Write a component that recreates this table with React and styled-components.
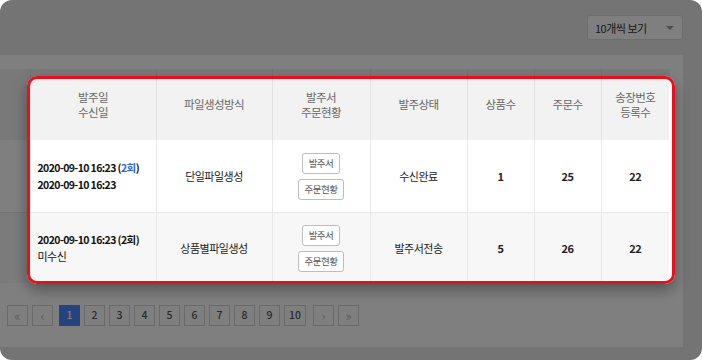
import React from 'react';
import styled, { createGlobalStyle } from 'styled-components';

const GlobalStyle = createGlobalStyle`
  html, body {
    margin: 0;
    padding: 0;
    background: #fff;
  }
  body {
    font-family: "Noto Sans CJK KR", "Noto Sans", sans-serif;
  }
`;

const Frame = styled.div`
  position: relative;
  width: 702px;
  height: 360px;
  border-radius: 12px;
  overflow: hidden;
  background: #e8e8e8;
  display: flex;
  flex-direction: column;
`;

const TopBar = styled.div`
  height: 55px;
  box-sizing: border-box;
  display: flex;
  justify-content: flex-end;
  align-items: flex-start;
  padding: 15px 19px 0 0;
`;

const Select = styled.div`
  box-sizing: border-box;
  width: 96px;
  height: 25px;
  padding: 0 8px 0 7px;
  display: flex;
  align-items: center;
  justify-content: space-between;
  background: #fff;
  border: 1px solid #dadada;
  border-radius: 3px;
  font-size: 11px;
  letter-spacing: -0.5px;
  color: #333;
`;

const Caret = styled.span`
  width: 0;
  height: 0;
  border-left: 4px solid transparent;
  border-right: 4px solid transparent;
  border-top: 4px solid #999;
`;

const Card = styled.div`
  box-sizing: border-box;
  width: 683px;
  height: 292px;
  background: #fff;
  padding: 14px 14px 0 0;
`;

const Table = styled.table`
  width: 669px;
  border-collapse: collapse;
  table-layout: fixed;
`;

const Th = styled.th`
  height: 71px;
  padding: 0;
  background: #f2f2f2;
  border-right: 1px solid #e2e2e2;
  font-size: 11.5px;
  font-weight: 400;
  line-height: 15px;
  letter-spacing: -0.6px;
  color: #666;
  text-align: center;
  &:last-child { border-right: none; }
`;

const Tr = styled.tr`
  background: ${p => (p.$alt ? '#f7f7f7' : '#fff')};
  border-bottom: 1px solid #e8e8e8;
  &:last-child { border-bottom: none; }
`;

const Td = styled.td`
  height: ${p => p.$h}px;
  padding: ${p => (p.$left ? '0 0 0 7px' : '0')};
  border-right: 1px solid #e8e8e8;
  font-size: 11px;
  font-weight: ${p => (p.$bold ? 700 : 400)};
  letter-spacing: -0.5px;
  color: #222;
  text-align: ${p => (p.$left ? 'left' : 'center')};
  vertical-align: middle;
  &:last-child { border-right: none; }
`;

const DateLine = styled.div`
  line-height: 17px;
  font-size: ${p => (p.$bold ? '10.5px' : '11px')};
  font-weight: ${p => (p.$bold ? 600 : 400)};
  letter-spacing: ${p => (p.$bold ? '-0.6px' : '-0.5px')};
  color: #111;
`;

const Count = styled.span`
  color: #2d63d8;
`;

const BtnStack = styled.div`
  display: flex;
  flex-direction: column;
  align-items: center;
  gap: 5px;
`;

const SmallBtn = styled.button`
  box-sizing: border-box;
  height: 21px;
  padding: 0 6px;
  background: #fff;
  border: 1px solid #bdbdbd;
  border-radius: 3px;
  font-family: inherit;
  font-size: 9.5px;
  letter-spacing: -0.5px;
  color: #555;
`;

const Pager = styled.div`
  display: flex;
  align-items: center;
  gap: 4px;
  margin-top: 22px;
  padding-left: 7px;
`;

const PageBtn = styled.div`
  box-sizing: border-box;
  min-width: 21px;
  height: 21px;
  padding: 0 4px ${p => (p.$muted ? 2 : 0)}px;
  display: flex;
  align-items: center;
  justify-content: center;
  margin-right: ${p => p.$mr || 0}px;
  background: ${p => (p.$active ? '#4a86ff' : '#fff')};
  border: 1px solid ${p => (p.$active ? '#4a86ff' : '#d4d4d4')};
  font-size: ${p => (p.$muted ? '14px' : '10.5px')};
  font-weight: ${p => (p.$muted ? 300 : 500)};
  line-height: 1;
  color: ${p => (p.$active ? '#fff' : p.$muted ? '#aaa' : '#555')};
`;

const Spotlight = styled.div`
  position: absolute;
  left: 27px;
  top: 76px;
  width: 648px;
  height: 208px;
  box-sizing: border-box;
  border: 3px solid #e8101c;
  border-radius: 10px;
  box-shadow: 0 0 0 1200px rgba(0, 0, 0, 0.5), 0 6px 14px rgba(0, 0, 0, 0.35);
  pointer-events: none;
`;

const cols = [30, 126, 116, 98, 97, 67, 67, 68];

const rows = [
  {
    sent: '2020-09-10 16:23',
    count: '2회',
    blue: true,
    recv: '2020-09-10 16:23',
    recvBold: true,
    method: '단일파일생성',
    status: '수신완료',
    goods: 1,
    orders: 25,
    invoices: 22,
    h: 72,
  },
  {
    sent: '2020-09-10 16:23',
    count: '2회',
    blue: false,
    recv: '미수신',
    recvBold: false,
    method: '상품별파일생성',
    status: '발주서전송',
    goods: 5,
    orders: 26,
    invoices: 22,
    h: 70,
  },
];

const pages = [1, 2, 3, 4, 5, 6, 7, 8, 9, 10];

export default function App() {
  return (
    <>
      <GlobalStyle />
      <Frame>
        <TopBar>
          <Select>
            <span>10개씩 보기</span>
            <Caret />
          </Select>
        </TopBar>
        <Card>
          <Table>
            <colgroup>
              {cols.map((w, i) => <col key={i} style={{ width: w }} />)}
            </colgroup>
            <thead>
              <tr>
                <Th />
                <Th>발주일<br />수신일</Th>
                <Th>파일생성방식</Th>
                <Th>발주서<br />주문현황</Th>
                <Th>발주상태</Th>
                <Th>상품수</Th>
                <Th>주문수</Th>
                <Th>송장번호<br />등록수</Th>
              </tr>
            </thead>
            <tbody>
              {rows.map((r, i) => (
                <Tr key={i} $alt={i % 2 === 1}>
                  <Td $h={r.h} />
                  <Td $h={r.h} $left>
                    <DateLine $bold>
                      {r.sent} ({r.blue ? <Count>{r.count}</Count> : r.count})
                    </DateLine>
                    <DateLine $bold={r.recvBold}>{r.recv}</DateLine>
                  </Td>
                  <Td $h={r.h}>{r.method}</Td>
                  <Td $h={r.h}>
                    <BtnStack>
                      <SmallBtn>발주서</SmallBtn>
                      <SmallBtn>주문현황</SmallBtn>
                    </BtnStack>
                  </Td>
                  <Td $h={r.h}>{r.status}</Td>
                  <Td $h={r.h} $bold>{r.goods}</Td>
                  <Td $h={r.h} $bold>{r.orders}</Td>
                  <Td $h={r.h} $bold>{r.invoices}</Td>
                </Tr>
              ))}
            </tbody>
          </Table>
          <Pager>
            <PageBtn $muted>«</PageBtn>
            <PageBtn $muted $mr={2}>‹</PageBtn>
            {pages.map(n => (
              <PageBtn key={n} $active={n === 1} $mr={n === 10 ? 3 : 0}>{n}</PageBtn>
            ))}
            <PageBtn $muted>›</PageBtn>
            <PageBtn $muted>»</PageBtn>
          </Pager>
        </Card>
        <Spotlight />
      </Frame>
    </>
  );
}
